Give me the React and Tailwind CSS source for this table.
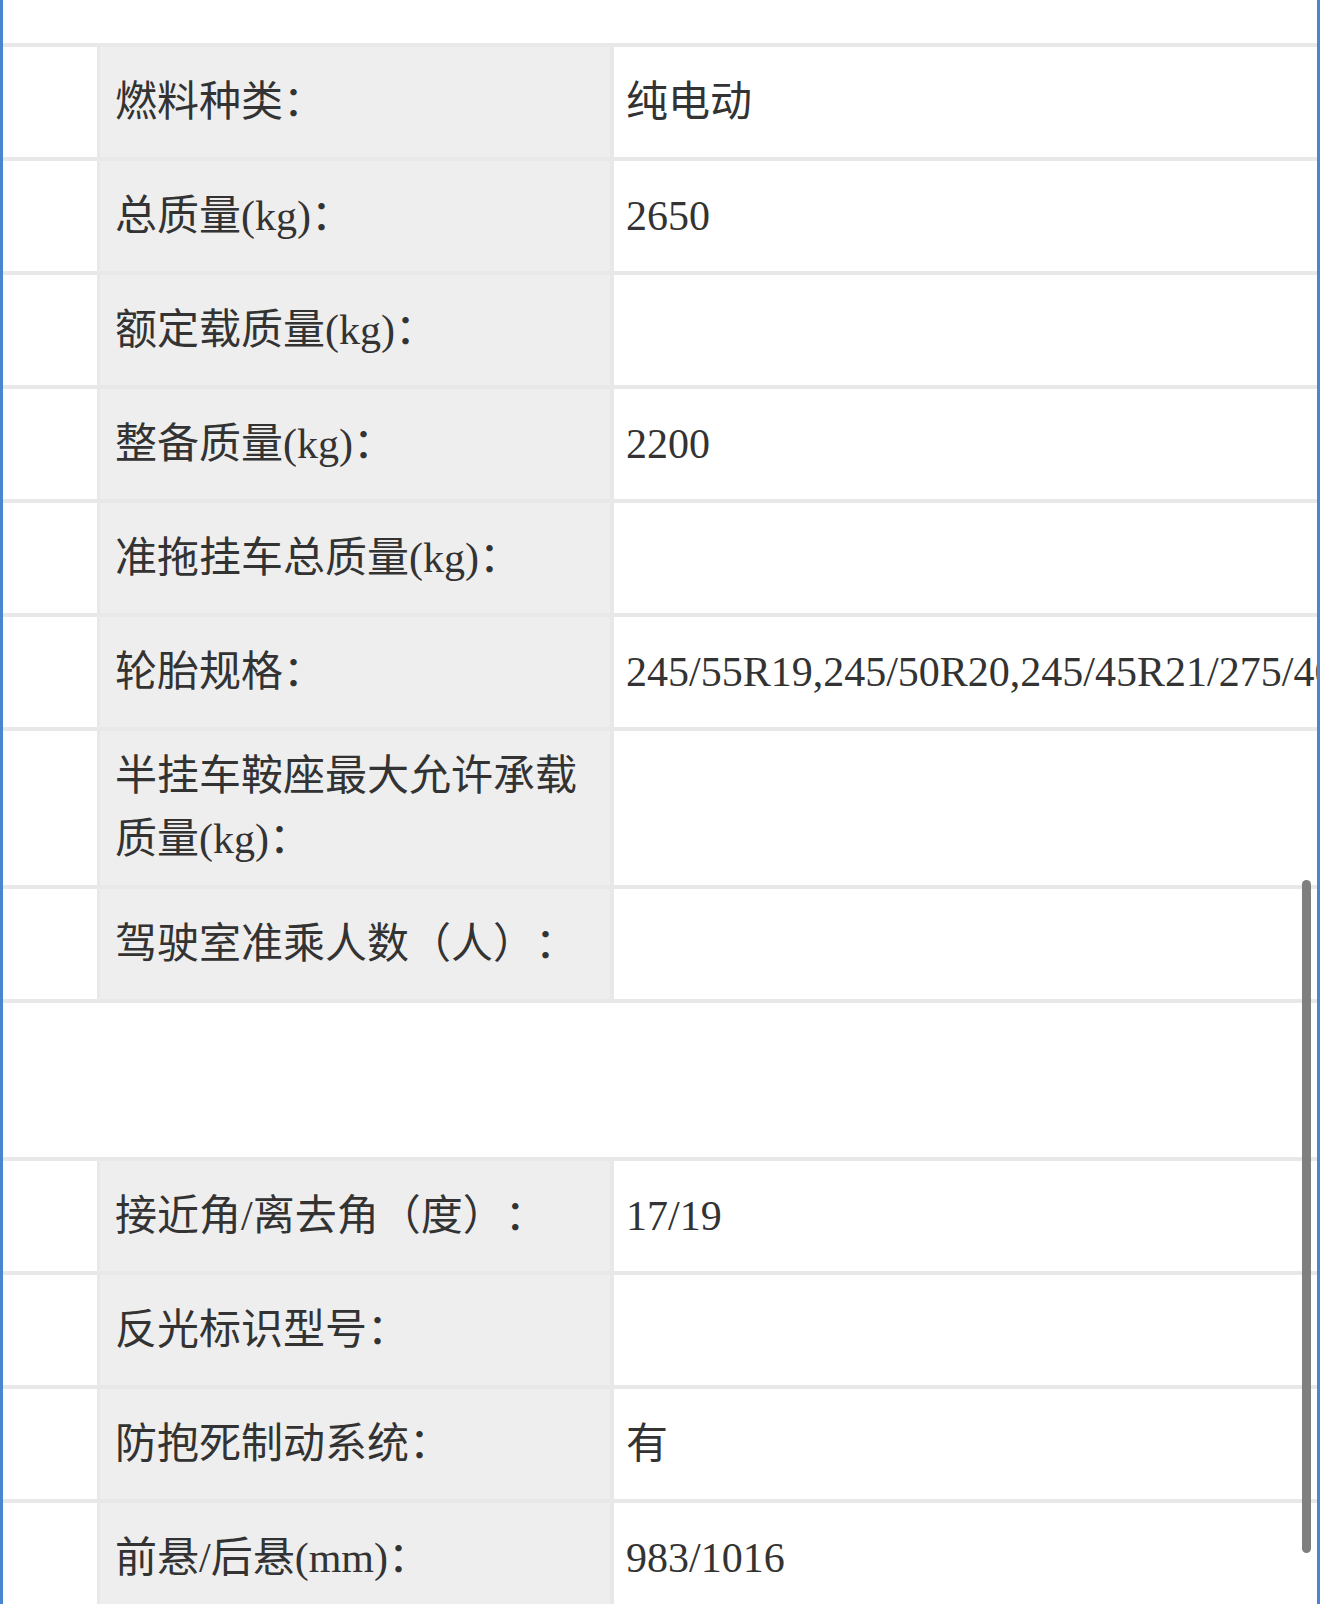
const rows = [
  { label: '燃料种类：', value: '纯电动' },
  { label: '总质量(kg)：', value: '2650' },
  { label: '额定载质量(kg)：', value: '' },
  { label: '整备质量(kg)：', value: '2200' },
  { label: '准拖挂车总质量(kg)：', value: '' },
  { label: '轮胎规格：', value: '245/55R19,245/50R20,245/45R21/275/40R21' },
  { label: '半挂车鞍座最大允许承载质量(kg)：', value: '' },
  { label: '驾驶室准乘人数（人）：', value: '' },
  { blank: true },
  { label: '接近角/离去角（度）：', value: '17/19' },
  { label: '反光标识型号：', value: '' },
  { label: '防抱死制动系统：', value: '有' },
  { label: '前悬/后悬(mm)：', value: '983/1016' },
];

const Row = ({ label, value }) => (
  <div className="flex bg-[#e8e8e8] pt-[4px]">
    <div className="w-[94px] shrink-0 bg-white" />
    <div className="ml-[3px] flex min-h-[110px] w-[510px] shrink-0 items-center bg-[#eeeeee] py-[14px] pl-[15px] pr-[15px]">
      <span>{label}</span>
    </div>
    <div className="ml-[4px] flex min-w-0 flex-1 items-center overflow-hidden whitespace-nowrap bg-white pl-[12px]">
      <span>{value}</span>
    </div>
  </div>
);

export default function App() {
  return (
    <div className="relative h-[1604px] w-[1320px] overflow-hidden bg-white">
      <div
        className="h-full border-x-[3px] border-[#4a86d0] text-[42px] leading-[63px] text-[#333333] [text-spacing-trim:space-all]"
        style={{ fontFamily: '"Liberation Serif", "Noto Sans CJK SC", serif' }}
      >
        {/* top white strip */}
        <div className="h-[43px] bg-white" />

        {rows.map((r, i) =>
          r.blank ? (
            <div key={i} className="bg-[#e8e8e8] pt-[4px]">
              <div className="h-[154px] bg-white" />
            </div>
          ) : (
            <Row key={i} label={r.label} value={r.value} />
          )
        )}
      </div>

      {/* scroll indicator */}
      <div className="absolute right-[9px] top-[880px] h-[673px] w-[9px] rounded-full bg-[#7f7f7f]" />
    </div>
  );
}
